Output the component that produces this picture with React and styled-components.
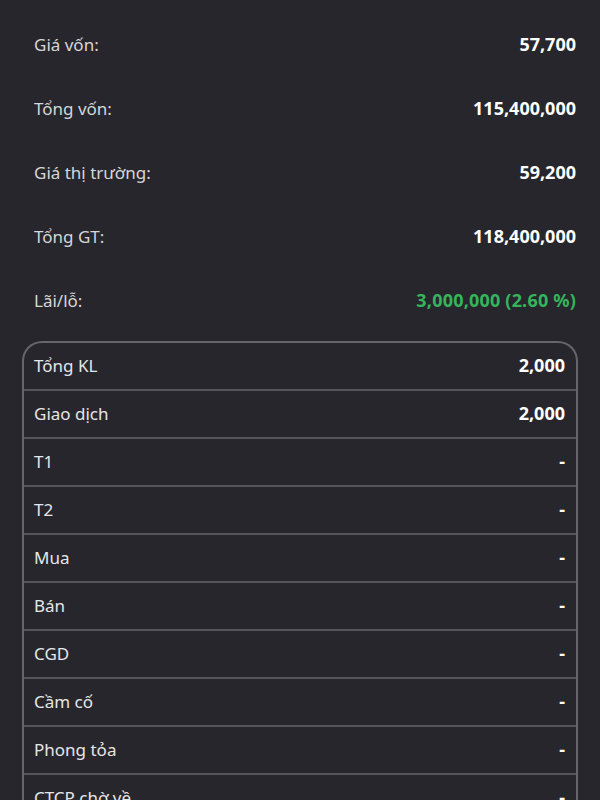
import React from 'react';
import styled, { createGlobalStyle } from 'styled-components';

const GlobalStyle = createGlobalStyle`
  html, body {
    margin: 0;
    padding: 0;
    background: #27262c;
    font-family: 'Noto Sans', 'Open Sans', sans-serif;
  }
`;

const Page = styled.div`
  width: 600px;
  height: 800px;
  overflow: hidden;
  background: #27262c;
  padding-top: 12px;
  box-sizing: border-box;
`;

const Summary = styled.div`
  display: flex;
  flex-direction: column;
  padding: 0 24px 0 34px;
`;

const SummaryRow = styled.div`
  height: 64px;
  display: flex;
  align-items: center;
  justify-content: space-between;
  font-size: 18px;
`;

const Label = styled.span`
  color: #d6d6da;
  font-size: 17px;
`;

const Value = styled.span`
  color: ${(p) => (p.$up ? '#35b55b' : '#ffffff')};
  font-weight: 700;
  letter-spacing: ${(p) => (p.$up ? '0.2px' : '0')};
`;

const Table = styled.div`
  margin: 9px 22px 0 22px;
  border: 2px solid #66656b;
  border-bottom: none;
  border-radius: 20px 20px 0 0;
  display: flex;
  flex-direction: column;
`;

const TableRow = styled.div`
  height: 46px;
  display: flex;
  align-items: center;
  justify-content: space-between;
  padding: 0 11px 2px 10px;
  box-sizing: content-box;
  height: 44px;
  font-size: 18px;
  border-bottom: 2px solid #55545a;
  &:last-child {
    border-bottom: none;
  }
`;

const RowLabel = styled.span`
  color: #e6e6e8;
  font-size: 17px;
`;

const summary = [
  ['Giá vốn:', '57,700'],
  ['Tổng vốn:', '115,400,000'],
  ['Giá thị trường:', '59,200'],
  ['Tổng GT:', '118,400,000'],
  ['Lãi/lỗ:', '3,000,000 (2.60 %)', true],
];

const rows = [
  ['Tổng KL', '2,000'],
  ['Giao dịch', '2,000'],
  ['T1', '-'],
  ['T2', '-'],
  ['Mua', '-'],
  ['Bán', '-'],
  ['CGD', '-'],
  ['Cầm cố', '-'],
  ['Phong tỏa', '-'],
  ['CTCP chờ về', '-'],
];

export default function App() {
  return (
    <Page>
      <GlobalStyle />
      <Summary>
        {summary.map(([label, value, up]) => (
          <SummaryRow key={label}>
            <Label>{label}</Label>
            <Value $up={up}>{value}</Value>
          </SummaryRow>
        ))}
      </Summary>
      <Table>
        {rows.map(([label, value]) => (
          <TableRow key={label}>
            <RowLabel>{label}</RowLabel>
            <Value>{value}</Value>
          </TableRow>
        ))}
      </Table>
    </Page>
  );
}
